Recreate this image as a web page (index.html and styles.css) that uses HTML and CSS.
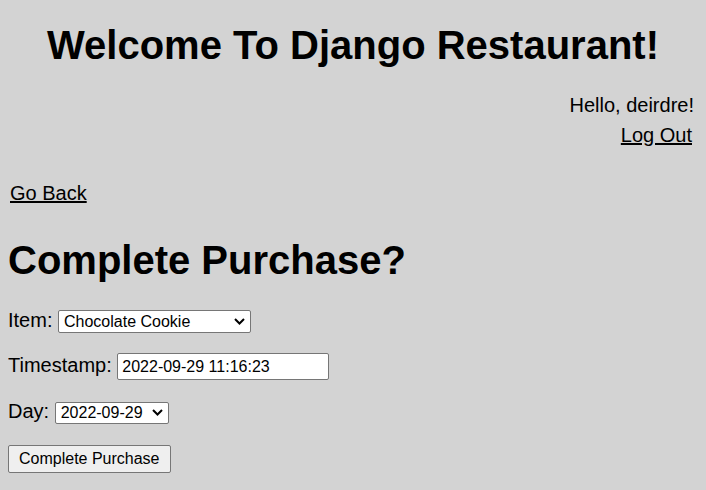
FILE: index.html
```html
<!DOCTYPE html>
<html>
<head>
<meta charset="utf-8">
<link rel="stylesheet" href="styles.css">
</head>
<body>
<header class="site-header">
  <h1 class="site-title">Welcome To Django Restaurant!</h1>
  <div class="user-box">
    <p class="greeting">Hello, deirdre!</p>
    <p class="logout"><a href="#">Log Out</a></p>
  </div>
</header>
<main class="content">
  <p class="back"><a href="#">Go Back</a></p>
  <h1 class="page-title">Complete Purchase?</h1>
  <form class="purchase-form">
    <p class="field">
      <label for="item">Item:</label>
      <select id="item" class="item-select"><option>Chocolate Cookie</option></select>
    </p>
    <p class="field">
      <label for="ts">Timestamp:</label>
      <input id="ts" class="ts-input" type="text" value="2022-09-29 11:16:23">
    </p>
    <p class="field">
      <label for="day">Day:</label>
      <select id="day" class="day-select"><option>2022-09-29</option></select>
    </p>
    <p class="field submit-row">
      <button type="button" class="submit">Complete Purchase</button>
    </p>
  </form>
</main>
</body>
</html>
```
FILE: styles.css
```css
html, body {
  background: #d3d3d3;
}
body {
  margin: 8px;
  font-family: "Liberation Sans", Arial, sans-serif;
  font-size: 20px;
  color: #000;
}
a {
  color: #000;
}
.site-title {
  font-size: 40px;
  text-align: center;
  margin: 15px 0 23px;
}
.user-box {
  text-align: right;
  padding-right: 4px;
}
.greeting {
  margin: 0;
  line-height: 29px;
}
.logout {
  margin: 0;
  line-height: 30px;
  padding-right: 2px;
}
.back {
  margin: 32px 0 0 2px;
}
.page-title {
  font-size: 40px;
  margin: 33px 0 26px;
}
.field {
  margin: 0 0 20px;
}
.submit-row {
  margin-top: 21px;
}
.purchase-form select,
.purchase-form input,
.purchase-form button {
  font-family: "Liberation Sans", Arial, sans-serif;
  font-size: 16px;
  box-sizing: border-box;
  color: #000;
}
.purchase-form select,
.purchase-form input {
  background-color: #fff;
  border: 1px solid #767676;
  border-radius: 2px;
}
.purchase-form select {
  -webkit-appearance: none;
  appearance: none;
  padding: 0 24px 0 5px;
  background-image: url("data:image/svg+xml,%3Csvg xmlns='http://www.w3.org/2000/svg' width='11' height='7' viewBox='0 0 11 7'%3E%3Cpath d='M1 1l4.5 4.5L10 1' fill='none' stroke='%23000' stroke-width='2'/%3E%3C/svg%3E");
  background-repeat: no-repeat;
  background-position: right 5px center;
  background-size: 11px 7px;
}
.item-select {
  width: 193px;
  height: 23px;
}
.ts-input {
  width: 212px;
  height: 27px;
  padding: 1px 4px;
}
.day-select {
  width: 114px;
  height: 22px;
}
.submit {
  height: 28px;
  padding: 1px 10px;
  background: #efefef;
  border: 1px solid #767676;
  border-radius: 2px;
}
```
